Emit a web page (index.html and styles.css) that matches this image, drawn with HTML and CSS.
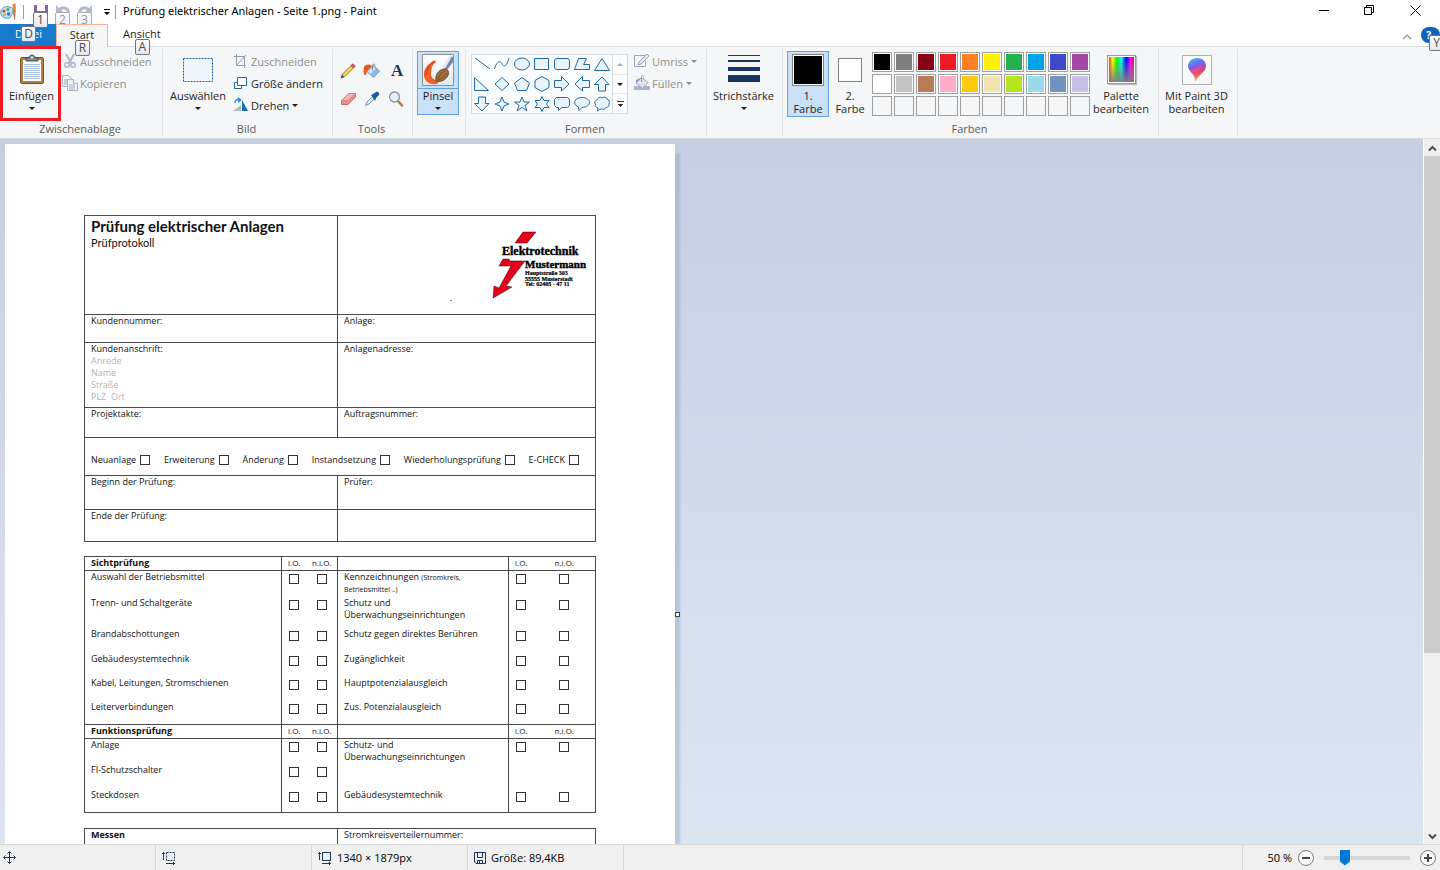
FILE: index.html
```html
<!DOCTYPE html>
<html lang="de">
<head>
  <meta charset="UTF-8">
  <meta name="viewport" content="width=device-width, initial-scale=1.0">
  <title>Prüfung elektrischer Anlagen - Seite 1.png - Paint</title>
  <link rel="stylesheet" href="styles.css">
</head>
<body>
  <header class="titlebar">
    <svg class="app-icon" width="18" height="18" viewBox="0 0 18 18">
      <path d="M1 8c1-4 5-5 8-4 3 0 5 2 4 5 0 2-2 2-2 4s-3 3-6 2-5-4-4-7z" fill="#bfe0f0" stroke="#4a9cc0"/>
      <circle cx="4" cy="8" r="1.500" fill="#e04a3a"/><circle cx="8" cy="6.500" r="1.500" fill="#3fae49"/>
      <circle cx="4.500" cy="11.500" r="1.500" fill="#f0b020"/><circle cx="8.500" cy="11" r="1.700" fill="#4868c8"/>
      <path d="M12.500 1.500l3-1 .5 6-3 .5z" fill="#e8872c"/><path d="M13 7h2.500l-1 10z" fill="#c88a50" stroke="#a05f2a" stroke-width=".5"/>
    </svg>
    <span class="title-sep"></span>
    <div class="quick">
      <button class="quick-btn" aria-label="Speichern">
        <svg width="16" height="16" viewBox="0 0 16 16"><path d="M1 1h14v14H1z" fill="#8a63b0"/><path d="M4 1h8v6H4z" fill="#fff"/><path d="M4 10h8v5H4z" fill="#d8cce6"/></svg>
        <kbd class="keytip">1</kbd>
      </button>
      <button class="quick-btn faded" aria-label="Rückgängig">
        <svg width="16" height="16" viewBox="0 0 16 16"><path d="M4 6c4-4 10-2 9 3 0 2-2 4-4 5" fill="none" stroke="#7e8cab" stroke-width="3"/><path d="M1 1v8h8z" fill="#7e8cab"/></svg>
        <kbd class="keytip">2</kbd>
      </button>
      <button class="quick-btn faded" aria-label="Wiederholen">
        <svg width="16" height="16" viewBox="0 0 16 16"><path d="M12 6C8 2 2 4 3 9c0 2 2 4 4 5" fill="none" stroke="#7e8cab" stroke-width="3"/><path d="M15 1v8H7z" fill="#7e8cab"/></svg>
        <kbd class="keytip">3</kbd>
      </button>
      <button class="quick-more" aria-label="Symbolleiste anpassen">
        <svg width="8" height="8" viewBox="0 0 8 8"><path d="M1 1.500h6" stroke="#000"/><path d="M1 4h6L4 7z"/></svg>
      </button>
    </div>
    <span class="title-sep"></span>
    <h1 class="title">Prüfung elektrischer Anlagen - Seite 1.png - Paint</h1>
    <div class="window-btns">
      <button aria-label="Minimieren"><svg width="11" height="11" viewBox="0 0 11 11"><path d="M1 5.500h10"/></svg></button>
      <button aria-label="Verkleinern"><svg width="11" height="11" viewBox="0 0 11 11"><path d="M.5 2.500h7v7h-7zM2.500 2.500v-2h7v7h-2"/></svg></button>
      <button aria-label="Schließen"><svg width="11" height="11" viewBox="0 0 11 11"><path d="M.5 .5l10 10M10.500 .5l-10 10"/></svg></button>
    </div>
  </header>

  <nav class="tabs">
    <button class="tab tab-file">Datei<kbd class="keytip">D</kbd></button>
    <button class="tab tab-active">Start<kbd class="keytip">R</kbd></button>
    <button class="tab">Ansicht<kbd class="keytip">A</kbd></button>
    <div class="tabs-right">
      <button class="collapse" aria-label="Menüband minimieren"><svg width="10" height="6" viewBox="0 0 10 6"><path d="M1 5l4-4 4 4" fill="none" stroke="#a0a0a0" stroke-width="1.500"/></svg></button>
      <button class="help" aria-label="Hilfe">?<kbd class="keytip">Y</kbd></button>
    </div>
  </nav>

  <section class="ribbon">
    <div class="group group-clipboard">
      <div class="group-body">
        <button class="big marked">
          <span class="big-icon"><svg width="26" height="32" viewBox="0 0 26 32">
            <rect x="1.500" y="3.500" width="23" height="26" rx="1.500" fill="#b5803c" stroke="#7a5428"/>
            <path d="M4 6h18v21H4z" fill="#fff"/>
            <path d="M5 10.500h16M5 12.500h16M5 14.500h16M5 16.500h16M5 18.500h16M5 20.500h16M5 22.500h16M5 24.500h16" stroke="#a9c3dc"/>
            <path d="M7 7V4h3c0-4 6-4 6 0h3v3z" fill="#8a8a8a" stroke="#505050"/><circle cx="13" cy="3.500" r="1" fill="#fff"/>
          </svg></span>
          Einfügen<i class="arrow"></i>
        </button>
        <div class="stack">
          <button class="small" disabled><svg width="16" height="16" viewBox="0 0 16 16" fill="none" stroke="#a9b4c6"><path d="M4 1l5 9M12 1L7 10" stroke-width="2"/><circle cx="5" cy="12" r="2.200" stroke-width="1.500"/><circle cx="11" cy="12" r="2.200" stroke-width="1.500"/></svg>Ausschneiden</button>
          <button class="small" disabled><svg width="16" height="16" viewBox="0 0 16 16" fill="#eef2f8" stroke="#a9b4c6"><path d="M.5 .5h6l3 3v8h-9z"/><path d="M2 5h4M2 7h4M2 9h4"/><path d="M5.500 4.500h6l4 4v7h-10z"/><path d="M11.500 4.500v4h4M7 10h6M7 12h6M7 14h6"/></svg>Kopieren</button>
        </div>
      </div>
      <div class="group-label">Zwischenablage</div>
    </div>

    <div class="group group-image">
      <div class="group-body">
        <button class="big">
          <span class="big-icon"><svg width="32" height="32" viewBox="0 0 32 32"><rect x="1.500" y="4.500" width="29" height="23" fill="#f0f6fc" stroke="#1a5fa8" stroke-dasharray="2 1"/></svg></span>
          Auswählen<i class="arrow"></i>
        </button>
        <div class="stack">
          <button class="small" disabled><svg width="16" height="16" viewBox="0 0 16 16" fill="none" stroke="#8f9db3"><path d="M3.500 1v11.500H13M1 3.500h10.500V15M4 12l9-10"/></svg>Zuschneiden</button>
          <button class="small"><svg width="16" height="16" viewBox="0 0 16 16" fill="#fff" stroke="#1a66a8"><path d="M1.500 7.500h7v6h-7z"/><path d="M4.500 2.500h9v8h-9z"/></svg>Größe ändern</button>
          <button class="small"><svg width="16" height="16" viewBox="0 0 16 16"><path d="M0 14h8V8z" fill="#b4b8bd"/><path d="M9 14V3l6 11z" fill="#1d6fb5"/><path d="M2 6c0-3 2-4 4-3" fill="none" stroke="#2f8bd8" stroke-width="1.500"/><path d="M5 0l4 3-4 3z" fill="#2f8bd8"/></svg>Drehen<i class="arrow"></i></button>
        </div>
      </div>
      <div class="group-label">Bild</div>
    </div>

    <div class="group group-tools">
      <div class="group-body">
        <div class="tools">
          <button aria-label="Stift"><svg width="16" height="16" viewBox="0 0 16 16"><path d="M1 15l1.500-4L11 2.500l2.500 2.500L5 13.500z" fill="#f3cf5b" stroke="#8d6a20" stroke-width=".8"/><path d="M11 2.500L13 .8l2.400 2.400-1.900 1.800z" fill="#e05a5a" stroke="#9c3030" stroke-width=".6"/><path d="M1 15l1-3 2 2z" fill="#333"/></svg></button>
          <button aria-label="Mit Farbe füllen"><svg width="18" height="16" viewBox="0 0 18 16"><path d="M10 2.500l6.500 5.500-6 6.500L4 8.500z" fill="#cfe0f0" stroke="#5a8fc0"/><path d="M13 5.500L7 11.500l3.500 3L16.500 8z" fill="#8fb6dc"/><path d="M9.500 7.500v-5c0-2 3-2 2.500 1" fill="none" stroke="#888"/><path d="M1 4c2-3 5-3 8-1L4 8l-1 4c-2 1-3-3-2-8z" fill="#e85a1e"/></svg></button>
          <button aria-label="Text"><svg width="16" height="16" viewBox="0 0 16 16"><text class="text-tool" x="2" y="13">A</text></svg></button>
          <button aria-label="Radiergummi"><svg width="17" height="16" viewBox="0 0 17 16"><path d="M1.500 9.500L9 2.500l6.500 0v3.500L8 13.500H1.500z" fill="#ec8f8f" stroke="#bd5454" stroke-width=".8"/><path d="M1.500 9.500L9 2.500h6.500L8 9.500z" fill="#f7b5b5" stroke="#cf7474" stroke-width=".6"/></svg></button>
          <button aria-label="Farbauswahl"><svg width="16" height="16" viewBox="0 0 16 16"><path d="M1.500 14.500L3 11l6-6 2 2-6 6z" fill="#dbeaf6" stroke="#58809f" stroke-width=".8"/><path d="M7 4l2-1 3-2c2-1 4 1 3 3l-3 3-1 3z" fill="#1c5c9b"/></svg></button>
          <button aria-label="Lupe"><svg width="16" height="16" viewBox="0 0 16 16"><path d="M10 10l4 4.500" stroke="#ae7a46" stroke-width="2.500" stroke-linecap="round"/><circle cx="6.500" cy="6" r="5" fill="#e3f0fa" stroke="#8b97a3" stroke-width="1.300"/></svg></button>
        </div>
      </div>
      <div class="group-label">Tools</div>
    </div>

    <div class="group group-brush">
      <div class="group-body">
        <button class="big selected split">
          <span class="big-icon"><svg width="32" height="32" viewBox="0 0 32 32">
            <defs><linearGradient id="sheet" x1="0" y1="0" x2="0" y2="1"><stop offset="0" stop-color="#fff"/><stop offset="1" stop-color="#dfe9ee"/></linearGradient></defs>
            <path d="M.5 .5h31v31H.5z" fill="url(#sheet)" stroke="#8e8e8e"/>
            <path d="M13 7C6 9 1 15 2 22c1 6 6 9 13 8l3-4c-5 1-8-1-9-5 0-6 1-10 5-13z" fill="#f0602a"/>
            <path d="M13 7C8 9 4 15 4 21" fill="none" stroke="#d8481a" stroke-width="1.500"/>
            <path d="M25 16l6-8V3l-2-1-8 11z" fill="#7387a8"/><path d="M20 14l8-13 2 1-7 13z" fill="#e3e8ef"/>
            <path d="M14 27c-1-7 3-11 8-12 4-1 6 4 3 8-3 4-7 5-11 4z" fill="#a06c3c" stroke="#6b4320"/>
            <path d="M16 25c1-4 4-7 7-8M16 26c4-1 7-4 9-7" stroke="#7b5028" fill="none"/>
          </svg></span>
          Pinsel<i class="arrow"></i>
        </button>
      </div>
      <div class="group-label"></div>
    </div>

    <div class="group group-shapes">
      <div class="group-body">
        <div class="gallery">
          <div class="shapes">
            <button aria-label="Linie"><svg viewBox="0 0 16 16"><path d="M1 2l15 11"/></svg></button>
            <button aria-label="Kurve"><svg viewBox="0 0 16 16"><path d="M.5 13C3 5 6 4 8 8s5 2 7-6" fill="none"/></svg></button>
            <button aria-label="Ellipse"><svg viewBox="0 0 16 16"><ellipse cx="8" cy="8" rx="7.500" ry="6"/></svg></button>
            <button aria-label="Rechteck"><svg viewBox="0 0 16 16"><path d="M.5 2.500h14v11H.5z"/></svg></button>
            <button aria-label="Abgerundetes Rechteck"><svg viewBox="0 0 16 16"><rect x=".5" y="2.500" width="15" height="11" rx="2.500"/></svg></button>
            <button aria-label="Polygon"><svg viewBox="0 0 16 16"><path d="M4.500 2.500h8l-3 6h6v5H.5z"/></svg></button>
            <button aria-label="Dreieck"><svg viewBox="0 0 16 16"><path d="M8 2.500l7.500 12H.5z"/></svg></button>
            <button aria-label="Rechtwinkliges Dreieck"><svg viewBox="0 0 16 16"><path d="M.5 1.500v13h14z"/></svg></button>
            <button aria-label="Raute"><svg viewBox="0 0 16 16"><path d="M8 1.500L15 8l-7 6.500L1 8z"/></svg></button>
            <button aria-label="Fünfeck"><svg viewBox="0 0 16 16"><path d="M8 1.500l7.500 5.500-3 7.500h-9L.5 7z"/></svg></button>
            <button aria-label="Sechseck"><svg viewBox="0 0 16 16"><path d="M8 .5l7 4v7l-7 4-7-4v-7z"/></svg></button>
            <button aria-label="Pfeil nach rechts"><svg viewBox="0 0 16 16"><path d="M.5 4.500h7v-4L15 8l-7.500 7v-3.500h-7z"/></svg></button>
            <button aria-label="Pfeil nach links"><svg viewBox="0 0 16 16"><path d="M15.500 4.500h-7v-4L1 8l7.500 7v-3.500h7z"/></svg></button>
            <button aria-label="Pfeil nach oben"><svg viewBox="0 0 16 16"><path d="M4.500 15V8.500h-4L8 1l7 7.500h-3.500V15z"/></svg></button>
            <button aria-label="Pfeil nach unten"><svg viewBox="0 0 16 16"><path d="M4.500 1v6.500h-4L8 15l7-7.500h-3.500V1z"/></svg></button>
            <button aria-label="Stern mit vier Zacken"><svg viewBox="0 0 16 16"><path d="M8 1l2 5 5 2-5 2-2 5-2-5-5-2 5-2z"/></svg></button>
            <button aria-label="Stern mit fünf Zacken"><svg viewBox="0 0 16 16"><path d="M8 1l2 5h5.500l-4.500 3.500 2 5.500-5-3.500L3 15l2-5.500L.5 6H6z"/></svg></button>
            <button aria-label="Stern mit sechs Zacken"><svg viewBox="0 0 16 16"><path d="M8 .5l2 4h5L12.500 8l2.500 3.500h-5l-2 4-2-4H1L3.500 8 1 4.500h5z"/></svg></button>
            <button aria-label="Rechteckige Legende"><svg viewBox="0 0 16 16"><path d="M2.500 1.500h11l2 2v6l-2 2H8l-3.500 3v-3h-2l-2-2v-6z"/></svg></button>
            <button aria-label="Ovale Legende"><svg viewBox="0 0 16 16"><path d="M8 1.500c10 0 10 9.500 0 10L5 14.500 4.500 11C-2 8.500 0 1.500 8 1.500z"/></svg></button>
            <button aria-label="Wolkenlegende"><svg viewBox="0 0 16 16"><path d="M3.500 3.500c0-2 3-3 4.500-1.500C10 .5 12.500 1 13 3c2.500 1 3 3 2 5 .5 2-1 3.500-3 3.500-1 2-3 2-4.500 1.500l-2 .5-2 1.500.5-3C2 11.500 1 10 1.500 8.500c-1.500-2-.5-4.500 2-5z"/></svg></button>
          </div>
          <div class="gallery-scroll">
            <button aria-label="Nach oben" disabled><i class="arrow up"></i></button>
            <button aria-label="Nach unten"><i class="arrow"></i></button>
            <button aria-label="Mehr"><i class="arrow more"></i></button>
          </div>
        </div>
        <div class="stack">
          <button class="small" disabled><svg width="16" height="16" viewBox="0 0 16 16" fill="none" stroke="#98a5ba"><path d="M12 2.500H.5v11h11V8"/><path d="M4 12l1-3 8-8 2 2-8 8z" fill="#e6ebf3"/></svg>Umriss<i class="arrow"></i></button>
          <button class="small" disabled><svg width="16" height="16" viewBox="0 0 16 16"><path d="M0 11h16v4H0z" fill="#a9b6cb"/><path d="M7.500 2.500l6.500 5-5.500 6L2 8z" fill="#dde4ee" stroke="#98a5ba"/><path d="M2 9V5l5.500-2.500L3 7z" fill="#8c9bb8"/><path d="M7.500 7V1.500c0-1.500 2.500-1.500 2 1" fill="none" stroke="#98a5ba"/></svg>Füllen<i class="arrow"></i></button>
        </div>
      </div>
      <div class="group-label">Formen</div>
    </div>

    <div class="group group-size">
      <div class="group-body">
        <button class="big">
          <span class="big-icon"><svg width="32" height="32" viewBox="0 0 32 32" fill="#1b365d"><path d="M0 1h32v1H0zM0 6h32v2H0zM0 13h32v4H0zM0 21h32v7H0z"/></svg></span>
          Strichstärke<i class="arrow"></i>
        </button>
      </div>
      <div class="group-label"></div>
    </div>

    <div class="group group-colors">
      <div class="group-body">
        <button class="big color-btn selected"><span class="big-icon"><span class="current current-1"></span></span>1.<br>Farbe</button>
        <button class="big color-btn"><span class="big-icon"><span class="current current-2"></span></span>2.<br>Farbe</button>
        <div class="palette">
          <button class="c-black" aria-label="Schwarz"></button>
          <button class="c-gray" aria-label="Grau"></button>
          <button class="c-darkred" aria-label="Dunkelrot"></button>
          <button class="c-red" aria-label="Rot"></button>
          <button class="c-orange" aria-label="Orange"></button>
          <button class="c-yellow" aria-label="Gelb"></button>
          <button class="c-green" aria-label="Grün"></button>
          <button class="c-turquoise" aria-label="Türkis"></button>
          <button class="c-indigo" aria-label="Indigo"></button>
          <button class="c-purple" aria-label="Lila"></button>
          <button class="c-white" aria-label="Weiß"></button>
          <button class="c-lightgray" aria-label="Hellgrau"></button>
          <button class="c-brown" aria-label="Braun"></button>
          <button class="c-rose" aria-label="Rosa"></button>
          <button class="c-gold" aria-label="Gold"></button>
          <button class="c-lightyellow" aria-label="Hellgelb"></button>
          <button class="c-lime" aria-label="Limone"></button>
          <button class="c-lightblue" aria-label="Helltürkis"></button>
          <button class="c-bluegray" aria-label="Blaugrau"></button>
          <button class="c-lavender" aria-label="Lavendel"></button>
          <button disabled aria-label="Leer"></button><button disabled aria-label="Leer"></button>
          <button disabled aria-label="Leer"></button><button disabled aria-label="Leer"></button>
          <button disabled aria-label="Leer"></button><button disabled aria-label="Leer"></button>
          <button disabled aria-label="Leer"></button><button disabled aria-label="Leer"></button>
          <button disabled aria-label="Leer"></button><button disabled aria-label="Leer"></button>
        </div>
        <button class="big edit-colors"><span class="big-icon"><span class="spectrum"></span></span>Palette<br>bearbeiten</button>
      </div>
      <div class="group-label">Farben</div>
    </div>

    <div class="group group-3d">
      <div class="group-body">
        <button class="big"><span class="big-icon"><svg width="30" height="30" viewBox="0 0 30 30">
          <defs><linearGradient id="drop" x1="0" y1="0" x2=".3" y2="1"><stop offset="0" stop-color="#22d3f0"/><stop offset=".4" stop-color="#7a5cf0"/><stop offset=".7" stop-color="#e0407a"/><stop offset="1" stop-color="#ffb020"/></linearGradient></defs>
          <path d="M.5 .5h29v29H.5z" fill="#fafafa" stroke="#b0b0b0"/>
          <path d="M15 3c6 0 9 4 9 8 0 6-7 8-11 16 0-4 0-6-3-9-2-2-4-4-4-7 0-4 4-8 9-8z" fill="url(#drop)"/>
          <path d="M7 13c3 3 9 0 13-3-2 5-6 9-8 12-1-4-4-5-5-9z" fill="#ff5468" fill-opacity=".55"/>
        </svg></span>Mit Paint 3D<br>bearbeiten</button>
      </div>
      <div class="group-label"></div>
    </div>
  </section>

  <main class="workspace">
    <div class="canvas-area">
      <article class="paper">
        <table class="form form-head">
          <colgroup><col class="col-half"><col></colgroup>
          <tr class="r-title">
            <td><h2>Prüfung elektrischer Anlagen</h2><p>Prüfprotokoll</p></td>
            <td>
              <div class="logo-row">
                <span>.</span>
                <svg class="logo" width="98" height="72" viewBox="0 0 98 72">
                  <path d="M32 3h13l-9 11H24z" fill="#e2001a" stroke="#400" stroke-width=".5"/>
                  <path d="M12 30h6l1 2h15L15 57l6 1L2 69l1-12 5 2 12-22-12 0z" fill="#e2001a" stroke="#400" stroke-width=".5"/>
                  <text class="logo-1" x="11" y="26">Elektrotechnik</text>
                  <text class="logo-2" x="34" y="39">Mustermann</text>
                  <text class="logo-3" x="34" y="46">Hauptstraße 303</text>
                  <text class="logo-3" x="34" y="52">55555 Musterstadt</text>
                  <text class="logo-3" x="34" y="57">Tel: 02405 - 47 11</text>
                </svg>
              </div>
            </td>
          </tr>
          <tr class="r-number"><td>Kundennummer:</td><td>Anlage:</td></tr>
          <tr class="r-address">
            <td>Kundenanschrift:<div class="hint">Anrede<br>Name<br>Straße<br>PLZ&nbsp; Ort</div></td>
            <td>Anlagenadresse:</td>
          </tr>
          <tr class="r-order"><td>Projektakte:</td><td>Auftragsnummer:</td></tr>
          <tr class="r-kind">
            <td colspan="2">
              <div class="kinds">
                <label>Neuanlage <input type="checkbox"></label>
                <label>Erweiterung <input type="checkbox"></label>
                <label>Änderung <input type="checkbox"></label>
                <label>Instandsetzung <input type="checkbox"></label>
                <label>Wiederholungsprüfung <input type="checkbox"></label>
                <label>E-CHECK <input type="checkbox"></label>
              </div>
            </td>
          </tr>
          <tr class="r-begin"><td>Beginn der Prüfung:</td><td>Prüfer:</td></tr>
          <tr class="r-end"><td>Ende der Prüfung:</td><td></td></tr>
        </table>

        <table class="form form-checks">
          <colgroup><col class="col-name"><col class="col-io"><col class="col-nio"><col class="col-name2"><col class="col-io"><col></colgroup>
          <tbody>
            <tr class="r-head"><th>Sichtprüfung</th><td>i.O.</td><td>n.i.O.</td><td></td><td>i.O.</td><td>n.i.O.</td></tr>
            <tr class="r-first"><td>Auswahl der Betriebsmittel</td><td><input type="checkbox" aria-label="i.O."></td><td><input type="checkbox" aria-label="n.i.O."></td><td>Kennzeichnungen <small>(Stromkreis,<br>Betriebsmittel ..)</small></td><td><input type="checkbox" aria-label="i.O."></td><td><input type="checkbox" aria-label="n.i.O."></td></tr>
            <tr class="r-wide"><td>Trenn- und Schaltgeräte</td><td><input type="checkbox" aria-label="i.O."></td><td><input type="checkbox" aria-label="n.i.O."></td><td>Schutz und<br>Überwachungseinrichtungen</td><td><input type="checkbox" aria-label="i.O."></td><td><input type="checkbox" aria-label="n.i.O."></td></tr>
            <tr><td>Brandabschottungen</td><td><input type="checkbox" aria-label="i.O."></td><td><input type="checkbox" aria-label="n.i.O."></td><td>Schutz gegen direktes Berühren</td><td><input type="checkbox" aria-label="i.O."></td><td><input type="checkbox" aria-label="n.i.O."></td></tr>
            <tr class="r-low"><td>Gebäudesystemtechnik</td><td><input type="checkbox" aria-label="i.O."></td><td><input type="checkbox" aria-label="n.i.O."></td><td>Zugänglichkeit</td><td><input type="checkbox" aria-label="i.O."></td><td><input type="checkbox" aria-label="n.i.O."></td></tr>
            <tr class="r-low"><td>Kabel, Leitungen, Stromschienen</td><td><input type="checkbox" aria-label="i.O."></td><td><input type="checkbox" aria-label="n.i.O."></td><td>Hauptpotenzialausgleich</td><td><input type="checkbox" aria-label="i.O."></td><td><input type="checkbox" aria-label="n.i.O."></td></tr>
            <tr class="r-low"><td>Leiterverbindungen</td><td><input type="checkbox" aria-label="i.O."></td><td><input type="checkbox" aria-label="n.i.O."></td><td>Zus. Potenzialausgleich</td><td><input type="checkbox" aria-label="i.O."></td><td><input type="checkbox" aria-label="n.i.O."></td></tr>
          </tbody>
          <tbody>
            <tr class="r-head"><th>Funktionsprüfung</th><td>i.O.</td><td>n.i.O.</td><td></td><td>i.O.</td><td>n.i.O.</td></tr>
            <tr><td>Anlage</td><td><input type="checkbox" aria-label="i.O."></td><td><input type="checkbox" aria-label="n.i.O."></td><td>Schutz- und<br>Überwachungseinrichtungen</td><td><input type="checkbox" aria-label="i.O."></td><td><input type="checkbox" aria-label="n.i.O."></td></tr>
            <tr><td>FI-Schutzschalter</td><td><input type="checkbox" aria-label="i.O."></td><td><input type="checkbox" aria-label="n.i.O."></td><td></td><td></td><td></td></tr>
            <tr class="r-low"><td>Steckdosen</td><td><input type="checkbox" aria-label="i.O."></td><td><input type="checkbox" aria-label="n.i.O."></td><td>Gebäudesystemtechnik</td><td><input type="checkbox" aria-label="i.O."></td><td><input type="checkbox" aria-label="n.i.O."></td></tr>
          </tbody>
        </table>

        <table class="form form-measure">
          <colgroup><col class="col-half"><col></colgroup>
          <tr class="r-number"><th>Messen</th><td>Stromkreisverteilernummer:</td></tr>
        </table>
        <span class="handle"></span>
      </article>
    </div>
    <div class="scrollbar">
      <button aria-label="Nach oben"><svg width="9" height="7" viewBox="0 0 9 7"><path d="M1 5.500L4.500 2 8 5.500"/></svg></button>
      <div class="track"><div class="thumb"></div></div>
      <button aria-label="Nach unten"><svg width="9" height="7" viewBox="0 0 9 7"><path d="M1 1.500L4.500 5 8 1.500"/></svg></button>
    </div>
  </main>

  <footer class="statusbar">
    <div class="cell cell-pos"><svg width="13" height="13" viewBox="0 0 13 13"><path d="M6.500 1v11M1 6.500h11M4.500 2.500l2-2 2 2M4.500 10.500l2 2 2-2M2.500 4.500l-2 2 2 2M10.500 4.500l2 2-2 2"/></svg></div>
    <div class="cell"><svg width="14" height="14" viewBox="0 0 14 14"><path d="M1.500 9V1M0 2.500h3M4 12.500h9M11.500 11v3"/><rect x="4.500" y="1.500" width="8" height="8" stroke-dasharray="2 1"/></svg></div>
    <div class="cell"><svg width="14" height="14" viewBox="0 0 14 14"><path d="M1.500 9V1M0 2.500h3M4 12.500h9M11.500 11v3"/><rect x="4.500" y="1.500" width="8" height="8"/></svg>1340 × 1879px</div>
    <div class="cell"><svg width="12" height="12" viewBox="0 0 12 12"><path d="M.5 .5h11v11H2l-1.500-1.500zM3.500 .5v5h5v-5M3.500 11.500v-3h5v3M5.500 9v2"/></svg>Größe: 89,4KB</div>
    <div class="zoom">
      <label for="zoom">50 %</label>
      <button aria-label="Verkleinern"><svg width="16" height="16" viewBox="0 0 16 16"><circle cx="8" cy="8" r="7.500" fill="#fafafa" stroke="#7a7a7a"/><path d="M4 8h8" stroke="#444" stroke-width="2"/></svg></button>
      <input id="zoom" type="range" min="0" max="100" value="21">
      <button aria-label="Vergrößern"><svg width="16" height="16" viewBox="0 0 16 16"><circle cx="8" cy="8" r="7.500" fill="#fafafa" stroke="#7a7a7a"/><path d="M4 8h8M8 4v8" stroke="#444" stroke-width="2"/></svg></button>
    </div>
  </footer>
</body>
</html>
```
FILE: styles.css
```css
*,
*::after {
  box-sizing: border-box;
}

body {
  margin: 0;
  height: 100vh;
  display: flex;
  flex-direction: column;
  overflow: hidden;
  background: #fff;
  color: #1e1e1e;
  font-family: "Open Sans", "Noto Sans", sans-serif;
  font-size: 11px;
}

button {
  margin: 0;
  padding: 0;
  border: 0;
  background: none;
  color: inherit;
  font: inherit;
}

/* Title bar */
.titlebar {
  display: flex;
  align-items: center;
  flex: none;
  height: 24px;
}

.title-sep {
  width: 1px;
  height: 14px;
  background: #a0a0a0;
}

.app-icon {
  margin-right: 5px;
}

.quick {
  display: flex;
  align-items: center;
  padding-left: 9px;
}

.quick-btn {
  position: relative;
  width: 22px;
  height: 16px;
  text-align: left;
}

.quick-btn svg {
  display: block;
}

.faded {
  opacity: .6;
}

.quick-more {
  display: flex;
  width: 16px;
  justify-content: center;
}

.title {
  margin: 0 0 0 7px;
  color: #000;
  font: 400 11px/22px "Noto Sans", sans-serif;
  height: 24px;
}

.window-btns {
  display: flex;
  margin: 0 2px 4px auto;
}

.window-btns button {
  display: flex;
  width: 46px;
  height: 20px;
  align-items: center;
  justify-content: center;
}

.window-btns path {
  fill: none;
  stroke: #000;
}

/* Access keys */
.keytip {
  position: absolute;
  z-index: 3;
  width: 15px;
  height: 16px;
  border: 1px solid #767676;
  border-radius: 2px;
  background: linear-gradient(#fff, #e4e5f0);
  color: #4a4a4a;
  font: 12px/14px "Open Sans", sans-serif;
  text-align: center;
}

.quick-btn .keytip {
  left: 0;
  top: 8px;
}

/* Tabs */
.tabs {
  display: flex;
  flex: none;
  height: 22px;
}

.tab {
  position: relative;
  padding: 0 15px;
  height: 22px;
  padding-bottom: 2px;
  line-height: 20px;
}

.tab-file {
  width: 56px;
  background: #1979ca;
  color: #fff;
}

.tab-active {
  z-index: 1;
  width: 52px;
  padding: 0 0 3px;
  height: 23px;
  border: 1px solid #f9b795;
  border-bottom: 0;
  background: #f5f6f7;
  line-height: 19px;
}

.tab .keytip {
  left: 50%;
  top: 15px;
  margin-left: -7px;
}

.tab-file .keytip {
  top: 2px;
}

.tabs-right {
  display: flex;
  margin-left: auto;
  align-items: center;
  gap: 9px;
}

.help {
  position: relative;
  width: 19px;
  height: 16px;
  padding-left: 5px;
  border-radius: 8px;
  background: #0d63b8;
  color: #fff;
  font-weight: 700;
  line-height: 14px;
  text-align: left;
}

.help .keytip {
  left: 8px;
  top: 8px;
}

/* Ribbon */
.ribbon {
  display: flex;
  flex: none;
  height: 93px;
  border-top: 1px solid #dadbdc;
  border-bottom: 1px solid #dadbdc;
  background: #f5f6f7;
}

.group {
  display: flex;
  flex-direction: column;
  flex: none;
  margin: 2px 0;
  border-right: 1px solid #e2e3e4;
}

.group-clipboard { width: 163px; }
.group-image { width: 170px; }
.group-tools { width: 80px; }
.group-brush { width: 53px; }
.group-shapes { width: 241px; }
.group-size { width: 76px; }
.group-colors { width: 376px; }
.group-3d { width: 79px; }

.group-body {
  display: flex;
  flex: 1;
  align-items: flex-start;
  padding: 2px 4px 0;
}

.group-label {
  height: 14px;
  padding-right: 2px;
  color: #5a5a5a;
  line-height: 14px;
  text-align: center;
}

.big {
  display: flex;
  flex-direction: column;
  align-items: center;
  padding-top: 3px;
  line-height: 13px;
  text-align: center;
}

.big-icon {
  display: flex;
  height: 35px;
  align-items: flex-start;
  justify-content: center;
}

.selected {
  border: 1px solid #62a2e4;
  padding-top: 2px;
  background: #c9e0f7;
}

.arrow {
  width: 0;
  height: 0;
  border: 3px solid transparent;
  border-top-color: currentColor;
  border-bottom: 0;
}

.big .arrow {
  margin-top: 5px;
}

.marked {
  position: relative;
  width: 55px;
}

.marked::after {
  content: '';
  position: absolute;
  z-index: 2;
  top: -5px;
  left: -4px;
  width: 61px;
  height: 75px;
  border: 3px solid #ed1c24;
}

.stack {
  display: flex;
  flex-direction: column;
}

.small {
  display: flex;
  height: 22px;
  align-items: center;
  gap: 2px;
  padding-bottom: 2px;
  white-space: nowrap;
}

.small:disabled {
  color: #8d8d8d;
}

.small .arrow {
  margin-left: 1px;
}

.group-clipboard .stack {
  padding-left: 3px;
}

.group-image .big {
  width: 62px;
}

.group-image .stack {
  padding-left: 4px;
}

.tools {
  display: grid;
  grid-template-columns: repeat(3, 24px);
  grid-auto-rows: 28px;
  padding-top: 6px;
}

.tools button {
  display: flex;
  align-items: center;
  justify-content: center;
}

.tools button:nth-child(-n+2),
.tools button:nth-child(n+4) {
  padding-right: 2px;
}

.text-tool {
  fill: #1b365d;
  font: bold 17px "Liberation Serif", serif;
}

.tools svg {
  overflow: visible;
}

.split {
  width: 42px;
  height: 64px;
  background: linear-gradient(#c9e0f7 36px, #62a2e4 36px, #62a2e4 37px, #c9e0f7 37px);
}

.gallery {
  display: flex;
  margin: 3px 6px 0 1px;
  border: 1px solid #d5d8dc;
  background: #fbfcfd;
}

.shapes {
  display: grid;
  grid-template-columns: repeat(7, 20px);
  grid-auto-rows: 20px;
  align-content: center;
  height: 58px;
}

.shapes button {
  display: flex;
  align-items: center;
  justify-content: center;
}

.shapes svg {
  width: 16px;
  height: 16px;
  fill: #e8f3fa;
  stroke: #1f6bab;
}

.gallery-scroll {
  display: flex;
  flex-direction: column;
  width: 15px;
  border-left: 1px solid #d5d8dc;
}

.gallery-scroll button {
  display: flex;
  flex: 1;
  align-items: center;
  justify-content: center;
}

.gallery-scroll button + button {
  border-top: 1px solid #e6e8ea;
}

.arrow.up {
  border: 3px solid transparent;
  border-top: 0;
  border-bottom-color: #a8a8a8;
}

.arrow.more {
  width: 7px;
  height: 6px;
  border: 0;
  border-top: 1px solid #333;
  background: linear-gradient(#333, #333) center 2px / 5px 1px no-repeat,
    linear-gradient(#333, #333) center 3px / 3px 1px no-repeat,
    linear-gradient(#333, #333) center 4px / 1px 1px no-repeat;
}

.group-size .big {
  width: 65px;
}

.color-btn {
  width: 42px;
  height: 66px;
}

.current {
  display: block;
  border: 1px solid #828282;
  box-shadow: inset 0 0 0 1px #fff;
}

.current-1 {
  width: 32px;
  height: 32px;
  background: #000;
}

.current-2 {
  width: 24px;
  height: 24px;
  margin-top: 4px;
  background: #fff;
}

.palette {
  display: grid;
  grid-template-columns: repeat(10, 20px);
  grid-auto-rows: 20px;
  gap: 2px;
  padding: 1px 0 0 1px;
}

.palette button {
  border: 1px solid #a0a0a0;
  box-shadow: inset 0 0 0 1px #fff;
}

.palette button:disabled {
  box-shadow: none;
}

.c-black { background: #000; }
.c-gray { background: #7f7f7f; }
.c-darkred { background: #880015; }
.c-red { background: #ed1c24; }
.c-orange { background: #ff7f27; }
.c-yellow { background: #fff200; }
.c-green { background: #22b14c; }
.c-turquoise { background: #00a2e8; }
.c-indigo { background: #3f48cc; }
.c-purple { background: #a349a4; }
.c-white { background: #fff; }
.c-lightgray { background: #c3c3c3; }
.c-brown { background: #b97a57; }
.c-rose { background: #ffaec9; }
.c-gold { background: #ffc90e; }
.c-lightyellow { background: #efe4b0; }
.c-lime { background: #b5e61d; }
.c-lightblue { background: #99d9ea; }
.c-bluegray { background: #7092be; }
.c-lavender { background: #c8bfe7; }

.edit-colors {
  width: 62px;
}

.spectrum {
  width: 29px;
  height: 29px;
  margin-top: 1px;
  border: 1px solid #999;
  background: linear-gradient(transparent 10%, #808080 100%),
    linear-gradient(90deg, #f00, #ff0, #0f0, #0ff, #00f, #f0f, #f00);
  box-shadow: inset 0 0 0 1px #fff, 1px 1px 1px #bbb;
}

.group-3d .big {
  width: 67px;
  white-space: nowrap;
}

.group-3d svg {
  margin-top: 1px;
}

/* Workspace */
.workspace {
  display: flex;
  flex: 1;
  min-height: 0;
}

.canvas-area {
  flex: 1;
  overflow: hidden;
  padding: 5px;
  background: linear-gradient(#c5cfe1, #dce6f2);
}

.paper {
  position: relative;
  width: 670px;
  height: 940px;
  padding: 71px 79px;
  background: #fff;
  box-shadow: 5px 9px 2px rgba(130, 150, 185, .35);
}

.handle {
  position: absolute;
  left: 100%;
  top: 50%;
  width: 5px;
  height: 5px;
  margin-top: -2px;
  border: 1px solid #444;
  background: #fff;
}

.scrollbar {
  display: flex;
  flex-direction: column;
  width: 17px;
  border-left: 1px solid #fff;
  background: #f0f0f0;
}

.scrollbar button {
  height: 17px;
}

.scrollbar path {
  fill: none;
  stroke: #505050;
  stroke-width: 2;
}

.track {
  flex: 1;
}

.thumb {
  height: 74%;
  background: #cdcdcd;
}

/* Form */
.form {
  width: 100%;
  border-collapse: collapse;
  table-layout: fixed;
  border: 1px solid #4a4a4a;
  color: #111;
  font: 9px/12px "Open Sans", sans-serif;
}

.form + .form {
  margin-top: 14px;
}

.form + .form-measure {
  margin-top: 15px;
}

.form td,
.form th {
  padding: 0 6px;
  text-align: left;
  vertical-align: top;
}

.form-head td,
.form-measure td,
.form-measure th {
  border: 1px solid #4a4a4a;
}

.form input {
  appearance: none;
  display: block;
  width: 10px;
  height: 10px;
  margin: 0;
  border: 1px solid #333;
}

.col-half { width: 253px; }
.col-name { width: 197px; }
.col-io { width: 25px; }
.col-nio { width: 31px; }
.col-name2 { width: 171px; }

.r-title { height: 99px; }
.r-number { height: 28px; }
.r-address { height: 65px; }
.r-order { height: 30px; }
.r-kind { height: 38px; }
.r-begin { height: 34px; }
.r-end { height: 32px; }

.form h2,
.form p {
  font-family: Lato, sans-serif;
}

.form h2 {
  margin: 2px 0 0;
  font-size: 15px;
  line-height: 17px;
}

.form p {
  margin: 0;
  font-size: 11px;
  line-height: 16px;
}

.logo-row {
  display: flex;
  justify-content: flex-end;
  align-items: flex-end;
  gap: 39px;
  padding-top: 13px;
}

.logo {
  margin-bottom: 3px;
}

.logo-1,
.logo-2,
.logo-3 {
  font-family: "Liberation Serif", serif;
  font-weight: 700;
  stroke: #000;
  stroke-width: .4px;
}

.logo-1 { font-size: 12px; }
.logo-2 { font-size: 11px; }
.logo-3 { font-size: 6px; stroke-width: .2px; }

.hint {
  color: #b4b4b4;
}

.kinds {
  display: flex;
  justify-content: space-between;
  padding: 16px 10px 0 0;
}

.kinds label {
  display: flex;
  align-items: center;
  gap: 4px;
}

.form-checks tr {
  height: 25px;
}

.form-checks .r-head { height: 14px; }
.form-checks .r-first { height: 26px; }
.form-checks .r-wide { height: 31px; }
.form-checks .r-low { height: 24px; }

.form-checks td:nth-child(2),
.form-checks td:nth-child(4),
.form-checks td:nth-child(5) {
  border-left: 1px solid #4a4a4a;
}

.form-checks td:nth-child(2),
.form-checks td:nth-child(3),
.form-checks td:nth-child(5),
.form-checks td:nth-child(6) {
  padding: 3px 0 0;
  text-align: center;
}

.form-checks td input {
  margin: 0 auto;
}

.form-checks .r-head > * {
  border-top: 1px solid #4a4a4a;
  border-bottom: 1px solid #4a4a4a;
}

.form-checks .r-head td:nth-child(n) {
  padding: 0;
  font-size: 8px;
}

.form small {
  font-size: 7px;
  line-height: 10px;
}

/* Status bar */
.statusbar {
  display: flex;
  flex: none;
  height: 26px;
  border-top: 1px solid #d7d7d7;
  background: #f0f0f0;
  color: #000;
}

.cell {
  display: flex;
  width: 156px;
  align-items: center;
  gap: 5px;
  padding-left: 6px;
  border-right: 1px solid #d7d7d7;
}

.cell-pos {
  padding-left: 3px;
}

.cell svg {
  fill: none;
  stroke: #1b365d;
}

.zoom {
  display: flex;
  margin-left: auto;
  align-items: center;
  gap: 6px;
  padding: 0 4px 0 24px;
  border-left: 1px solid #d7d7d7;
}

.zoom button svg {
  display: block;
}

.zoom input {
  appearance: none;
  width: 86px;
  height: 18px;
  margin: 0 4px;
  background: linear-gradient(#d6d6d6, #d6d6d6) center / 100% 4px no-repeat;
}

.zoom input::-webkit-slider-thumb {
  appearance: none;
  width: 10px;
  height: 16px;
  background: #0078d7;
  clip-path: polygon(0 0, 100% 0, 100% 75%, 50% 100%, 0 75%);
}
```
